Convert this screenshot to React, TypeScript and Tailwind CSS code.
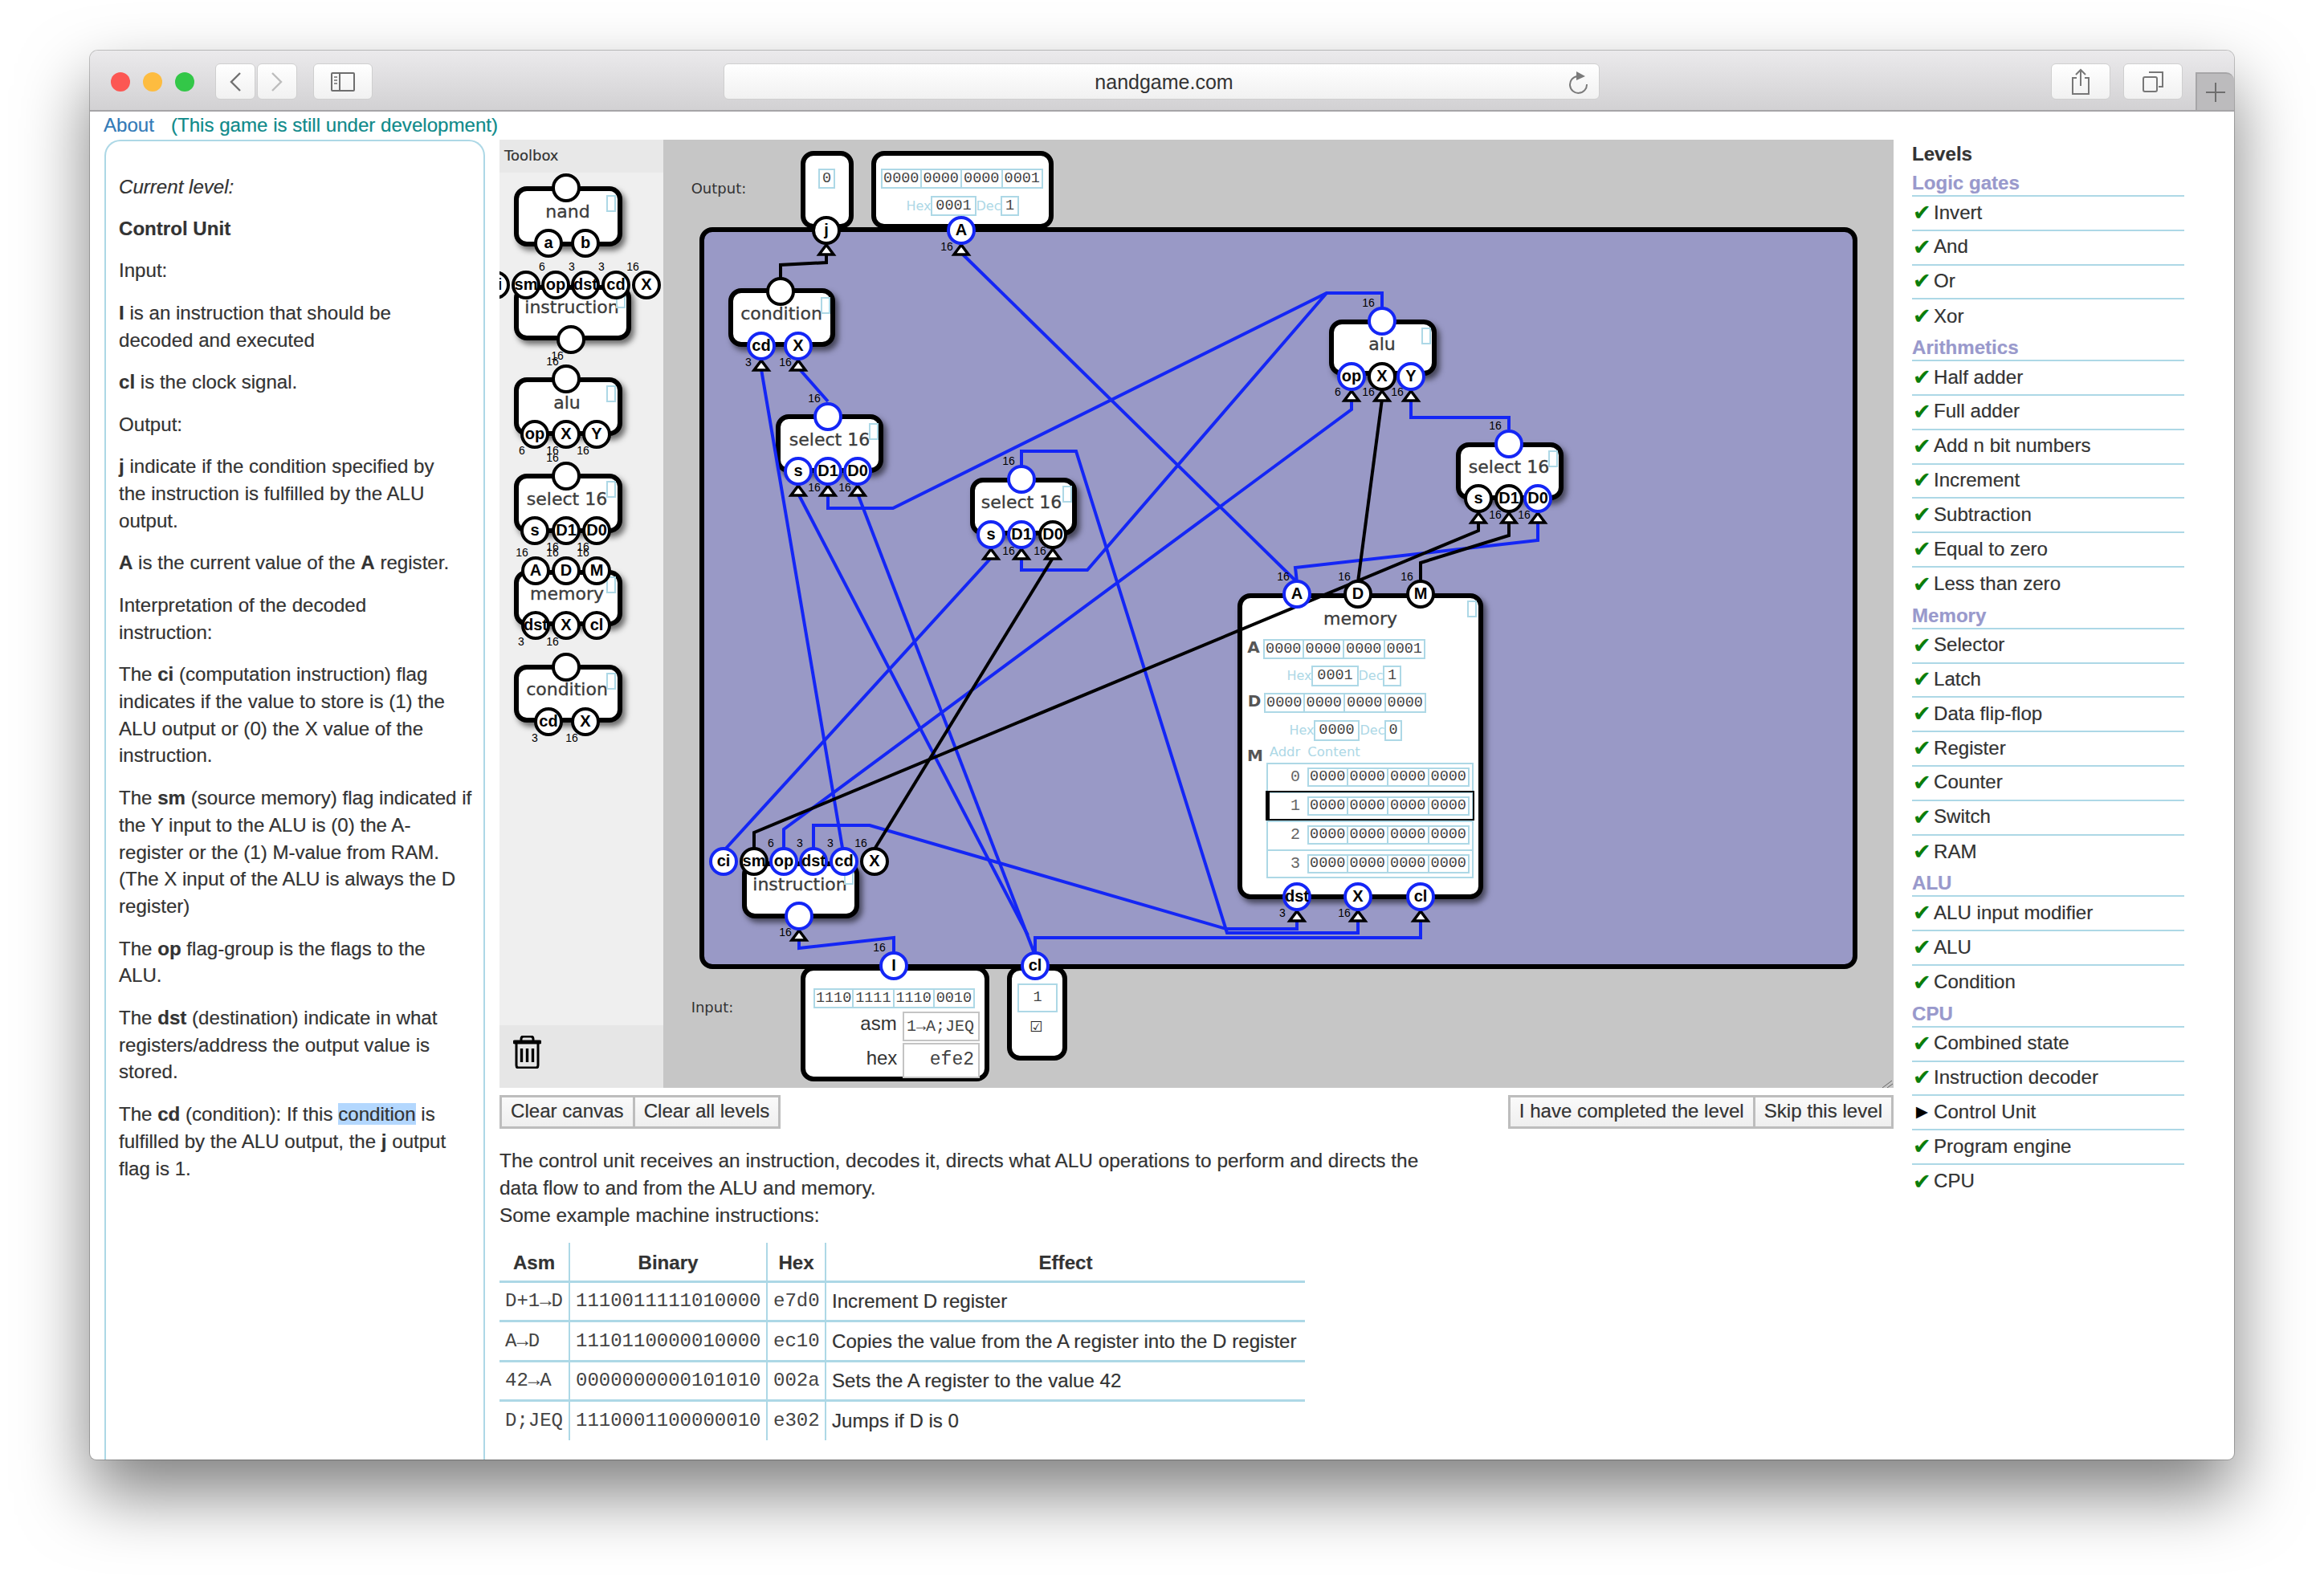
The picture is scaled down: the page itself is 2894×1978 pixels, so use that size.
import { Fragment, type ReactNode } from "react";

// origin of the diagram area (toolbox + canvas) inside the page
const OX = 622;
const OY = 174;

const BLUE = "#1426f5";

type Body = { x: number; y: number; r: number; b: number; title?: string; tx?: number; ty?: number; mark?: [number, number]; flat?: boolean };
type Pin = [number, number, string, ("b" | "k")?, boolean?];
type Num = [number, number, number];

const BODIES: Body[] = [
  // toolbox
  { x: 640, y: 232, r: 775, b: 307, title: "nand", tx: 707, ty: 264, mark: [755, 243] },
  { x: 640, y: 355, r: 786, b: 424, title: "instruction", tx: 712, ty: 383, mark: [767, 363] },
  { x: 640, y: 470, r: 775, b: 543, title: "alu", tx: 706, ty: 502, mark: [755, 480] },
  { x: 640, y: 590, r: 775, b: 664, title: "select 16", tx: 706, ty: 622, mark: [755, 599] },
  { x: 640, y: 710, r: 775, b: 780, title: "memory", tx: 706, ty: 740, mark: [755, 718] },
  { x: 640, y: 828, r: 775, b: 900, title: "condition", tx: 706, ty: 859, mark: [755, 838] },
  // canvas
  { x: 997, y: 188, r: 1063, b: 285, flat: true },
  { x: 1085, y: 188, r: 1312, b: 285, flat: true },
  { x: 997, y: 1203, r: 1232, b: 1347, flat: true },
  { x: 1254, y: 1203, r: 1329, b: 1321, flat: true },
  { x: 907, y: 359, r: 1040, b: 432, title: "condition", tx: 973, ty: 391, mark: [1022, 370] },
  { x: 966, y: 516, r: 1100, b: 589, title: "select 16", tx: 1033, ty: 548, mark: [1082, 527] },
  { x: 1208, y: 595, r: 1341, b: 667, title: "select 16", tx: 1272, ty: 626, mark: [1323, 605] },
  { x: 1655, y: 398, r: 1789, b: 468, title: "alu", tx: 1721, ty: 429, mark: [1770, 408] },
  { x: 1813, y: 551, r: 1947, b: 623, title: "select 16", tx: 1879, ty: 582, mark: [1928, 561] },
  { x: 1541, y: 739, r: 1847, b: 1120, title: "memory", tx: 1694, ty: 771, mark: [1827, 748] },
  { x: 924, y: 1073, r: 1070, b: 1144, title: "instruction", tx: 996, ty: 1102, mark: [1051, 1081] },
];

const PINS: Pin[] = [
  // toolbox
  [705, 234, ""], [683, 303, "a"], [729, 303, "b"],
  [617, 355, "ci"], [655, 355, "sm"], [692, 355, "op"], [729, 355, "dst"], [767, 355, "cd"], [805, 355, "X"], [711, 423, ""],
  [705, 472, ""], [666, 541, "op"], [705, 541, "X"], [743, 541, "Y"],
  [705, 593, ""], [666, 661, "s"], [705, 661, "D1"], [743, 661, "D0"],
  [667, 711, "A"], [705, 711, "D"], [743, 711, "M"], [667, 779, "dst"], [705, 779, "X"], [743, 779, "cl"],
  [705, 831, ""], [683, 899, "cd"], [729, 899, "X"],
  // canvas
  [1029, 287, "j", "k", true], [1197, 287, "A", "b", true],
  [972, 363, "", "k"], [948, 431, "cd", "b", true], [994, 431, "X", "b", true],
  [1031, 519, "", "b"], [994, 587, "s", "b", true], [1031, 587, "D1", "b", true], [1068, 587, "D0", "b", true],
  [1272, 597, "", "b"], [1234, 666, "s", "b", true], [1272, 666, "D1", "b", true], [1311, 666, "D0", "k", true],
  [1721, 400, "", "b"], [1683, 469, "op", "b", true], [1721, 469, "X", "k", true], [1757, 469, "Y", "b", true],
  [1879, 553, "", "b"], [1841, 621, "s", "k", true], [1879, 621, "D1", "k", true], [1915, 621, "D0", "b", true],
  [1615, 740, "A", "b"], [1691, 740, "D", "k"], [1769, 740, "M", "k"],
  [1615, 1117, "dst", "b", true], [1691, 1117, "X", "b", true], [1769, 1117, "cl", "b", true],
  [901, 1073, "ci", "b"], [939, 1073, "sm", "k"], [976, 1073, "op", "b"], [1013, 1073, "dst", "b"], [1051, 1073, "cd", "b"], [1089, 1073, "X", "k"],
  [995, 1141, "", "b", true],
  [1113, 1203, "I", "b"], [1289, 1203, "cl", "b"],
];

const NUMS: Num[] = [
  [675, 333, 6], [712, 333, 3], [749, 333, 3], [788, 333, 16], [688, 451, 16], [694, 444, 16],
  [650, 562, 6], [688, 562, 16], [726, 562, 16], [688, 571, 16],
  [650, 689, 16], [688, 682, 16], [688, 689, 16], [726, 682, 16], [726, 689, 16],
  [649, 800, 3], [688, 800, 16], [666, 920, 3], [712, 920, 16],
  [1179, 308, 16], [932, 452, 3], [978, 452, 16], [1014, 497, 16], [1014, 608, 16], [1052, 608, 16],
  [1256, 575, 16], [1256, 687, 16], [1295, 687, 16],
  [1704, 378, 16], [1666, 489, 6], [1704, 489, 16], [1740, 489, 16],
  [1862, 531, 16], [1862, 642, 16], [1898, 642, 16],
  [1598, 719, 16], [1674, 719, 16], [1752, 719, 16], [1597, 1138, 3], [1674, 1138, 16],
  [960, 1051, 6], [996, 1051, 3], [1034, 1051, 3], [1072, 1051, 16], [978, 1162, 16], [1095, 1181, 16],
];

const BLACK_WIRES = [
  [[972, 350], [972, 330], [1029, 327], [1029, 315]],
  [[939, 1060], [939, 1037], [1841, 661], [1841, 648]],
  [[1691, 725], [1721, 497]],
  [[1769, 725], [1769, 701], [1879, 667], [1879, 648]],
  [[1090, 1056], [1311, 695]],
];

const BLUE_WIRES = [
  [[1197, 315], [1615, 725]],
  [[1615, 725], [1613, 707], [1915, 673], [1915, 648]],
  [[1721, 385], [1721, 365], [1652, 365], [1112, 633], [1031, 633], [1031, 615]],
  [[1652, 365], [1354, 710], [1272, 710], [1272, 695]],
  [[1879, 535], [1879, 520], [1757, 520], [1757, 497]],
  [[976, 1060], [976, 1033], [1683, 510], [1683, 497]],
  [[901, 1060], [1234, 695]],
  [[1272, 580], [1272, 562], [1340, 562], [1528, 1162], [1691, 1162], [1691, 1145]],
  [[1013, 1060], [1013, 1028], [1083, 1028], [1527, 1157], [1615, 1157], [1615, 1145]],
  [[1289, 1190], [1289, 1168], [1769, 1168], [1769, 1145]],
  [[948, 460], [1049, 1056]],
  [[994, 458], [1031, 500]],
  [[994, 615], [1280, 1165]],
  [[1068, 615], [1289, 1190]],
  [[1113, 1186], [1113, 1168], [995, 1181], [995, 1168]],
];

const pts = (w: number[][]) => w.map(([x, y]) => `${x - OX},${y - OY}`).join(" ");

function Title({ x, y, children, className }: { x: number; y: number; children: ReactNode; className: string }) {
  return (
    <span
      className={`absolute -translate-x-1/2 -translate-y-1/2 whitespace-nowrap ${className}`}
      style={{ left: x - OX, top: y - OY }}
    >
      {children}
    </span>
  );
}

function Field({ x, y, r, b, children, className = "" }: { x: number; y: number; r: number; b: number; children?: ReactNode; className?: string }) {
  return (
    <div
      className={`absolute flex items-center justify-center border-2 border-[#add8e6] font-['Liberation_Mono',monospace] text-[18.5px] text-[#444] ${className}`}
      style={{ left: x - OX, top: y - OY, width: r - x, height: b - y }}
    >
      {children}
    </div>
  );
}

// sixteen bit register field, four boxes of four digits
function Bits({ x, y, r, b, value }: { x: number; y: number; r: number; b: number; value: string }) {
  const w = (r - x) / 4;
  return (
    <>
      {[0, 1, 2, 3].map((i) => (
        <Field key={i} x={x + i * w - (i ? 2 : 0)} y={y} r={x + (i + 1) * w} b={b}>
          {value.slice(i * 4, i * 4 + 4)}
        </Field>
      ))}
    </>
  );
}

function HexDec({ x, y, b, hex, dec, hr, dx, dr }: { x: number; y: number; b: number; hex: string; dec: string; hr: number; dx: number; dr: number }) {
  return (
    <>
      <Title x={x - 15} y={(y + b) / 2} className="font-['DejaVu_Sans',sans-serif] text-[16px] text-[#add8e6]">Hex</Title>
      <Field x={x} y={y} r={hr} b={b}>{hex}</Field>
      <Title x={dx - 15} y={(y + b) / 2} className="font-['DejaVu_Sans',sans-serif] text-[16px] text-[#add8e6]">Dec</Title>
      <Field x={dx} y={y} r={dr} b={b}>{dec}</Field>
    </>
  );
}

function Diagram() {
  return (
    <div className="absolute inset-0 overflow-hidden [-webkit-text-stroke:0]">
      <div className="absolute left-[249px] top-[109px] h-[924px] w-[1442px] rounded-[16px] border-[6px] border-black bg-[#9999c6]" />

      <Title x={895} y={235} className="font-['DejaVu_Sans',sans-serif] text-[18px] text-[#333]">Output:</Title>
      <Title x={887} y={1255} className="font-['DejaVu_Sans',sans-serif] text-[18px] text-[#333]">Input:</Title>

      {BODIES.map((n, i) => (
        <Fragment key={i}>
          <div
            className={`absolute rounded-[16px] border-[6px] border-black bg-white ${n.flat ? "" : "shadow-[4px_5px_7px_rgba(0,0,0,0.55)]"}`}
            style={{ left: n.x - OX, top: n.y - OY, width: n.r - n.x, height: n.b - n.y }}
          />
          {n.title && (
            <Title x={n.tx!} y={n.ty!} className="font-['DejaVu_Sans',sans-serif] text-[22px] text-[#3c3c3c] [-webkit-text-stroke:0.35px_#3c3c3c]">
              {n.title}
            </Title>
          )}
          {n.mark && (
            <div
              className="absolute h-[21px] w-[12px] border-2 border-[#add8e6]"
              style={{ left: n.mark[0] - OX, top: n.mark[1] - OY }}
            />
          )}
        </Fragment>
      ))}

      {/* output node fields */}
      <Field x={1019} y={210} r={1040} b={235}>0</Field>
      <Bits x={1097} y={210} r={1299} b={235} value="0000000000000001" />
      <HexDec x={1159} y={244} b={269} hex="0001" dec="1" hr={1216} dx={1246} dr={1269} />

      {/* memory contents */}
      <Title x={1561} y={807} className="font-['DejaVu_Sans',sans-serif] text-[20px] font-bold text-[#555]">A</Title>
      <Bits x={1573} y={796} r={1775} b={821} value="0000000000000001" />
      <HexDec x={1633} y={829} b={855} hex="0001" dec="1" hr={1692} dx={1722} dr={1745} />
      <Title x={1562} y={874} className="font-['DejaVu_Sans',sans-serif] text-[20px] font-bold text-[#555]">D</Title>
      <Bits x={1574} y={863} r={1776} b={888} value="0000000000000000" />
      <HexDec x={1636} y={897} b={923} hex="0000" dec="0" hr={1693} dx={1724} dr={1746} />
      <Title x={1563} y={942} className="font-['DejaVu_Sans',sans-serif] text-[20px] font-bold text-[#555]">M</Title>
      <Title x={1600} y={937} className="font-['DejaVu_Sans',sans-serif] text-[16.5px] text-[#add8e6]">Addr</Title>
      <Title x={1661} y={937} className="font-['DejaVu_Sans',sans-serif] text-[16.5px] text-[#add8e6]">Content</Title>
      <div className="absolute left-[955px] top-[776px] h-[144px] w-[258px] border-2 border-[#add8e6]" />
      {[0, 1, 2, 3].map((i) => (
        <Fragment key={i}>
          {i > 0 && <div className="absolute left-[955px] h-[2px] w-[258px] bg-[#add8e6]" style={{ top: 776 + i * 36 }} />}
          <Title x={1613} y={968 + i * 36} className="font-['Liberation_Mono',monospace] text-[20px] text-[#666]">{i}</Title>
          <Bits x={1628} y={956 + i * 36} r={1830} b={980 + i * 36} value="0000000000000000" />
        </Fragment>
      ))}
      <div className="absolute left-[954px] top-[811px] h-[37px] w-[260px] border-2 border-l-[5px] border-black" />

      {/* input node fields */}
      <Bits x={1013} y={1231} r={1214} b={1256} value="1110111111100010" />
      <Title x={1094} y={1275} className="font-['Liberation_Sans',sans-serif] text-[24px] text-[#333]">asm</Title>
      <div className="absolute left-[502px] top-[1086px] flex h-[37px] w-[96px] items-center justify-end border-2 border-[#c4c4c4] bg-white pr-[5px] font-['Liberation_Mono',monospace] text-[20px] text-[#444]">
        1→A;JEQ
      </div>
      <Title x={1098} y={1318} className="font-['Liberation_Sans',sans-serif] text-[24px] text-[#333]">hex</Title>
      <div className="absolute left-[502px] top-[1125px] flex h-[44px] w-[96px] items-center justify-end border-2 border-[#c4c4c4] bg-white pr-[5px] font-['Liberation_Mono',monospace] text-[23px] text-[#444]">
        efe2
      </div>
      <Field x={1267} y={1225} r={1317} b={1261}>1</Field>
      <Title x={1290} y={1279} className="font-['DejaVu_Sans',sans-serif] text-[18px] font-bold text-[#222]">☑</Title>

      <svg className="absolute inset-0" width={1736} height={1181} fill="none">
        {BLUE_WIRES.map((w, i) => (
          <polyline key={i} points={pts(w)} stroke={BLUE} strokeWidth={4} />
        ))}
        {BLACK_WIRES.map((w, i) => (
          <polyline key={i} points={pts(w)} stroke="#000" strokeWidth={4} />
        ))}
        {PINS.filter((p) => p[4]).map(([x, y], i) => {
          const cx = x - OX;
          const cy = y - OY;
          return (
            <polygon
              key={i}
              points={`${cx - 9},${cy + 30} ${cx + 9},${cy + 30} ${cx},${cy + 18}`}
              fill="#fff"
              stroke="#000"
              strokeWidth={3.5}
            />
          );
        })}
      </svg>

      {PINS.map(([x, y, label, color], i) => (
        <div
          key={i}
          className={`absolute flex h-[36px] w-[36px] -translate-x-1/2 -translate-y-1/2 items-center justify-center rounded-full border-[4px] bg-white font-['Liberation_Sans',sans-serif] text-[20px] font-bold text-black ${color === "b" ? "border-[#1426f5]" : "border-black"}`}
          style={{ left: x - OX, top: y - OY }}
        >
          {label}
        </div>
      ))}

      {NUMS.map(([x, y, n], i) => (
        <Title key={i} x={x} y={y} className="font-['Liberation_Sans',sans-serif] text-[14px] text-black">{n}</Title>
      ))}

      {/* resize grip */}
      <svg className="absolute bottom-0 right-0" width={16} height={10} fill="none" stroke="#666" strokeWidth={1}>
        <path d="M2 10 L14 1 M8 10 L15 5" />
      </svg>
    </div>
  );
}

function Toolbar() {
  const btn = "flex h-[45px] items-center justify-center rounded-[6px] border border-[#cfcfcf] bg-gradient-to-b from-white to-[#f1f1f1]";
  return (
    <div className="flex h-[76px] shrink-0 items-center rounded-t-[10px] border-b-2 border-[#a6a5a7] bg-gradient-to-b from-[#ebeaec] to-[#d2d1d3] pt-[3px] [-webkit-text-stroke:0]">
      <div className="ml-[26px] flex gap-4">
        <div className="h-6 w-6 rounded-full bg-[#fc5753]" />
        <div className="h-6 w-6 rounded-full bg-[#fdbc40]" />
        <div className="h-6 w-6 rounded-full bg-[#33c748]" />
      </div>
      <div className={`${btn} ml-[26px] w-[50px]`}>
        <svg width="16" height="24" fill="none" stroke="#717171" strokeWidth="2.4"><path d="M14 1 L3 12 L14 23" /></svg>
      </div>
      <div className={`${btn} ml-[2px] w-[50px]`}>
        <svg width="16" height="24" fill="none" stroke="#bdbdbd" strokeWidth="2.4"><path d="M2 1 L13 12 L2 23" /></svg>
      </div>
      <div className={`${btn} ml-[20px] w-[74px]`}>
        <svg width="30" height="24" fill="none" stroke="#6e6e6e" strokeWidth="2">
          <rect x="1" y="1" width="28" height="22" rx="1" />
          <path d="M11 1 V23" />
          <path d="M4 6 H8 M4 10 H8 M4 14 H8" strokeWidth="1.6" />
        </svg>
      </div>
      <div className={`${btn} relative ml-[437px] w-[1091px] pl-[6px] pt-[2px] font-['Liberation_Sans',sans-serif] text-[25px] text-[#333]`}>
        nandgame.com
        <svg className="absolute right-[13px] top-[9px]" width="24" height="28" viewBox="0 0 24 28" fill="none">
          <path d="M10 6 A10.5 10.5 0 1 0 22 16" stroke="#7a7a7a" strokeWidth="2" />
          <path d="M9 0 L20 6 L9 11 Z" fill="#7a7a7a" />
        </svg>
      </div>
      <div className={`${btn} ml-[562px] w-[74px]`}>
        <svg width="24" height="34" fill="none" stroke="#777" strokeWidth="2">
          <path d="M7 12 H2 V32 H22 V12 H17" />
          <path d="M12 22 V2 M6 8 L12 2 L18 8" />
        </svg>
      </div>
      <div className={`${btn} ml-4 w-[74px]`}>
        <svg width="26" height="26" fill="none" stroke="#777" strokeWidth="2">
          <rect x="1" y="7" width="17" height="18" rx="2" />
          <path d="M8 1 H25 V19 H20" />
        </svg>
      </div>
      <div className="ml-4 flex h-[47px] w-[48px] items-center justify-center self-end rounded-tr-[10px] border-l-2 border-t-2 border-[#a6a5a7] bg-[#bcbbbd]">
        <svg width="24" height="24" stroke="#6e6e6e" strokeWidth="2"><path d="M0 12 H24 M12 0 V24" /></svg>
      </div>
    </div>
  );
}

// line breaks follow the text column of the original page
const PARAS: ReactNode[] = [
  <i>Current level:</i>,
  <b>Control Unit</b>,
  "Input:",
  <><b>I</b> is an instruction that should be<br />decoded and executed</>,
  <><b>cl</b> is the clock signal.</>,
  "Output:",
  <><b>j</b> indicate if the condition specified by<br />the instruction is fulfilled by the ALU<br />output.</>,
  <><b>A</b> is the current value of the <b>A</b> register.</>,
  <>Interpretation of the decoded<br />instruction:</>,
  <>The <b>ci</b> (computation instruction) flag<br />indicates if the value to store is (1) the<br />ALU output or (0) the X value of the<br />instruction.</>,
  <>The <b>sm</b> (source memory) flag indicated if<br />the Y input to the ALU is (0) the A-<br />register or the (1) M-value from RAM.<br />(The X input of the ALU is always the D<br />register)</>,
  <>The <b>op</b> flag-group is the flags to the<br />ALU.</>,
  <>The <b>dst</b> (destination) indicate in what<br />registers/address the output value is<br />stored.</>,
  <>The <b>cd</b> (condition): If this <span className="bg-[#b3d7fe]">condition</span> is<br />fulfilled by the ALU output, the <b>j</b> output<br />flag is 1.</>,
];

const ROWS = [
  ["D+1→D", "1110011111010000", "e7d0", "Increment D register"],
  ["A→D", "1110110000010000", "ec10", "Copies the value from the A register into the D register"],
  ["42→A", "0000000000101010", "002a", "Sets the A register to the value 42"],
  ["D;JEQ", "1110001100000010", "e302", "Jumps if D is 0"],
];

const LEVELS: [string, string[]][] = [
  ["Logic gates", ["Invert", "And", "Or", "Xor"]],
  ["Arithmetics", ["Half adder", "Full adder", "Add n bit numbers", "Increment", "Subtraction", "Equal to zero", "Less than zero"]],
  ["Memory", ["Selector", "Latch", "Data flip-flop", "Register", "Counter", "Switch", "RAM"]],
  ["ALU", ["ALU input modifier", "ALU", "Condition"]],
  ["CPU", ["Combined state", "Instruction decoder", "Control Unit", "Program engine", "CPU"]],
];

function Levels() {
  return (
    <div className="ml-[23px] w-[339px] shrink-0 pt-[1px]">
      <div className="h-[36px] font-bold leading-[34px]">Levels</div>
      {LEVELS.map(([group, items]) => (
        <div key={group}>
          <div className="h-[34px] border-b-2 border-[#add8e6] font-bold leading-[34px] text-[#9999cc]">{group}</div>
          {items.map((item, i) => (
            <div
              key={item}
              className={`flex h-[42.8px] items-center pb-[2px] ${i < items.length - 1 ? "border-b-2 border-[#add8e6]" : ""}`}
            >
              {item === "Control Unit" ? (
                <span className="ml-[5px] w-[22px] font-['DejaVu_Sans',sans-serif] text-[19px] text-black">▶</span>
              ) : (
                <span className="ml-[1px] w-[26px] font-['DejaVu_Sans',sans-serif] text-[27px] leading-none text-[#0a7d0a]">✔</span>
              )}
              {item}
            </div>
          ))}
        </div>
      ))}
    </div>
  );
}

export default function App() {
  const tool = "h-[42px] border-[3px] border-[#bdbdbd] bg-gradient-to-b from-[#fafafa] to-[#efefef] px-[11px] pb-[2px] text-[#333]";
  return (
    <div className="h-[1978px] w-[2894px] overflow-hidden bg-white pl-[112px] pt-[63px]">
      <div className="flex h-[1755px] w-[2670px] flex-col rounded-t-[10px] rounded-b-[8px] bg-white font-['Liberation_Sans',Arial,sans-serif] text-[24.1px] leading-[33.8px] text-[#333] shadow-[0_0_0_1px_rgba(0,0,0,0.22),0_42px_85px_rgba(0,0,0,0.5)] [-webkit-text-stroke:0.2px]">
        <Toolbar />

        <div className="flex h-[35px] shrink-0 items-center pb-[2px] pl-[17px]">
          <a className="text-[#337ab7]">About</a>
          <span className="ml-[21px] text-[#0f8a8a]">(This game is still under development)</span>
        </div>

        <div className="flex min-h-0 flex-1 overflow-hidden pl-[18px]">
          <div className="w-[474px] shrink-0 rounded-t-[20px] border-2 border-b-0 border-[#add8e6] px-4 pt-[39.5px]">
            {PARAS.map((p, i) => (
              <p key={i} className="mb-[18.7px] whitespace-nowrap">{p}</p>
            ))}
          </div>

          <div className="ml-[18px] w-[1736px] shrink-0">
            <div className="relative flex h-[1181px]">
              <div className="flex w-[204px] flex-col bg-[#efefef]">
                <div className="flex h-[41px] items-center bg-[#e8e8e8] pb-[2px] pl-[6px] font-['DejaVu_Sans',sans-serif] text-[18px]">Toolbox</div>
                <div className="flex-1" />
                <div className="h-[78px] bg-[#e6e6e6] pl-[17px] pt-[13px]">
                  <svg width="35" height="41" viewBox="0 0 35 41" fill="none" stroke="#000">
                    <path d="M10 6 V4 Q10 1 13 1 H22 Q25 1 25 4 V6" strokeWidth="3" />
                    <path d="M2 8 H33" strokeWidth="5" strokeLinecap="round" />
                    <path d="M4 10 V37 Q4 40 7 40 H28 Q31 40 31 37 V10" strokeWidth="3" />
                    <path d="M10.5 16 V33 M17.5 16 V33 M24.5 16 V33" strokeWidth="3.4" />
                  </svg>
                </div>
              </div>
              <div className="flex-1 bg-[#c6c6c6]" />
              <Diagram />
            </div>

            <div className="mt-[9px] flex justify-between">
              <div className="flex">
                <button className={tool}>Clear canvas</button>
                <button className={`${tool} -ml-[3px]`}>Clear all levels</button>
              </div>
              <div className="flex">
                <button className={tool}>I have completed the level</button>
                <button className={`${tool} -ml-[3px]`}>Skip this level</button>
              </div>
            </div>

            <div className="mt-[23px] w-[1190px] text-[24.4px]">
              The control unit receives an instruction, decodes it, directs what ALU operations to perform and directs the data flow to and from the ALU and memory.
              <br />
              Some example machine instructions:
            </div>

            <table className="mt-[18px] w-[1003px] table-fixed border-collapse">
              <colgroup>
                <col className="w-[87px]" />
                <col className="w-[246px]" />
                <col className="w-[73px]" />
                <col />
              </colgroup>
              <thead>
                <tr className="h-[48px] border-b-[3px] border-[#add8e6]">
                  {["Asm", "Binary", "Hex", "Effect"].map((h, i) => (
                    <th key={h} className={`pt-[2px] font-bold ${i < 3 ? "border-r-2 border-[#add8e6]" : ""}`}>{h}</th>
                  ))}
                </tr>
              </thead>
              <tbody>
                {ROWS.map((r, ri) => (
                  <tr key={r[0]} className={`h-[49.5px] ${ri < 3 ? "border-b-[3px] border-[#add8e6]" : ""}`}>
                    {r.map((c, i) => (
                      <td
                        key={i}
                        className={
                          i < 3
                            ? "whitespace-nowrap border-r-2 border-[#add8e6] pl-[7px] font-['Liberation_Mono',monospace] text-[24px] text-[#444] [-webkit-text-stroke:0]"
                            : "whitespace-nowrap pl-[7px]"
                        }
                      >
                        {c}
                      </td>
                    ))}
                  </tr>
                ))}
              </tbody>
            </table>
          </div>

          <Levels />
        </div>
      </div>
    </div>
  );
}
